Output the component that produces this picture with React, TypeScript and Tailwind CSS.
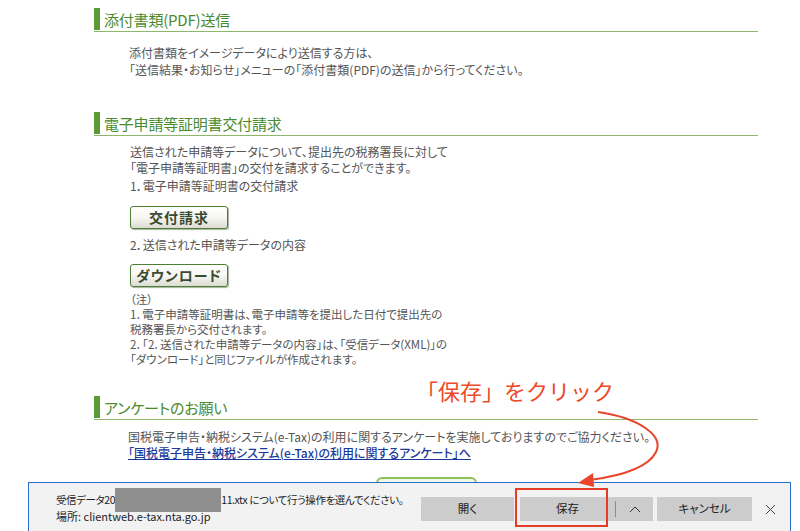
import React from 'react';

const jp = "font-['MS_PGothic','Noto_Sans_CJK_JP',sans-serif]";

const SectionHeader: React.FC<{ title: string }> = ({ title }) => (
  <div className="flex h-[24px] border-b border-[#8db86c]">
    <div className="w-[6px] h-[22px] bg-[#5b9a34]" />
    <div className="ml-[4px] text-[15px] leading-[23px] text-[#4a8a2c] tracking-[-0.2px]">{title}</div>
  </div>
);

const GreenButton: React.FC<{ label: string }> = ({ label }) => (
  <button className="w-[98px] h-[23px] rounded-[3px] border border-[#4d7f33] bg-gradient-to-b from-white via-[#f7f7f3] to-[#dcdcd4] shadow-[1px_1px_1px_rgba(60,80,40,0.45)] text-[14px] font-bold text-[#3a4a30] leading-[21px] tracking-[1px]">
    {label}
  </button>
);

export default function App() {
  return (
    <div className={`relative w-[800px] h-[531px] overflow-hidden bg-white ${jp} [font-feature-settings:'palt']`}>
      <div className="ml-[94px] w-[664px] pt-[8px]">
        <SectionHeader title="添付書類(PDF)送信" />
        <div className="mt-[12px] pl-[35px] text-[12px] leading-[17px] text-[#555]">
          <p>添付書類をイメージデータにより送信する方は、</p>
          <p>「送信結果・お知らせ」メニューの「添付書類(PDF)の送信」から行ってください。</p>
        </div>

        <div className="mt-[34px]">
          <SectionHeader title="電子申請等証明書交付請求" />
        </div>
        <div className="mt-[8px] pl-[36px] text-[12px] leading-[16px] text-[#555]">
          <p>送信された申請等データについて、提出先の税務署長に対して</p>
          <p>「電子申請等証明書」の交付を請求することができます。</p>
          <p className="mt-[2px]">1．電子申請等証明書の交付請求</p>
          <div className="mt-[12px]">
            <GreenButton label="交付請求" />
          </div>
          <p className="mt-[8px]">2．送信された申請等データの内容</p>
          <div className="mt-[11px]">
            <GreenButton label="ダウンロード" />
          </div>
          <div className="mt-[5px] text-[11.5px] leading-[15px]">
            <p>（注）</p>
            <p>1．電子申請等証明書は、電子申請等を提出した日付で提出先の</p>
            <p>税務署長から交付されます。</p>
            <p>2．「2．送信された申請等データの内容」は、「受信データ(XML)」の</p>
            <p>「ダウンロード」と同じファイルが作成されます。</p>
          </div>
        </div>

        <div className="mt-[29px]">
          <SectionHeader title="アンケートのお願い" />
        </div>
        <div className="mt-[9px] pl-[34px] text-[12px] leading-[16px] text-[#555]">
          <p>国税電子申告・納税システム(e-Tax)の利用に関するアンケートを実施しておりますのでご協力ください。</p>
          <a className="text-[#1a3a9a] underline font-medium">「国税電子申告・納税システム(e-Tax)の利用に関するアンケート」へ</a>
        </div>
        <div className="mt-[16px] flex justify-center">
          <div className="w-[101px] h-[26px] rounded-[6px] border-2 border-[#8cc35a] bg-gradient-to-b from-[#eef7e6] to-white" />
        </div>
      </div>

      {/* annotation */}
      <div className="absolute left-[416px] top-[375px] text-[22px] leading-[30px] text-[#ee4a2a] font-['Noto_Sans_CJK_JP',sans-serif] [font-feature-settings:normal]">
        「保存」をクリック
      </div>

      {/* download bar */}
      <div className="absolute left-[28px] top-[482px] w-[763px] h-[60px] border border-[#2b6fd0] bg-[#f2f2f2] font-['Noto_Sans_CJK_JP',sans-serif]">
        <div className="flex items-start">
          <div className="pl-[27px] pt-[9px] text-[11px] leading-[16px] text-[#222] w-[392px] shrink-0 whitespace-nowrap">
            <div className="flex items-center text-[10.5px] tracking-[-0.4px]">
              <span>受信データ20</span>
              <span className="inline-block w-[106px] h-[24px] bg-[#8f8f8f] -my-[4px]" />
              <span>11.xtx について行う操作を選んでください。</span>
            </div>
            <div>場所: clientweb.e-tax.nta.go.jp</div>
          </div>
          <div className="flex items-center pt-[14px] text-[11.5px] text-[#222] whitespace-nowrap">
            <button className="w-[93px] h-[24px] bg-[#cccccc]">開く</button>
            <button className="ml-[6px] w-[95px] h-[24px] bg-[#cccccc]">保存</button>
            <div className="w-px h-[24px] bg-[#cccccc] flex items-center">
              <div className="w-px h-[16px] bg-[#8a8a8a]" />
            </div>
            <button className="w-[37px] h-[24px] bg-[#cccccc] flex items-center justify-center">
              <svg width="12" height="8" viewBox="0 0 12 8" fill="none" stroke="#333" strokeWidth="1">
                <path d="M1 7 L6 2 L11 7" />
              </svg>
            </button>
            <button className="ml-[4px] w-[95px] h-[24px] bg-[#cccccc]">キャンセル</button>
            <button className="ml-[8px] w-[20px] h-[24px] flex items-center justify-center">
              <svg width="11" height="11" viewBox="0 0 11 11" stroke="#444" strokeWidth="1">
                <path d="M1 1 L10 10 M10 1 L1 10" />
              </svg>
            </button>
          </div>
        </div>
      </div>

      {/* red highlight around save */}
      <div className="absolute left-[515px] top-[488px] w-[93px] h-[39px] border-2 border-[#e53d25]" />

      {/* curved arrow */}
      <svg className="absolute left-0 top-0" width="800" height="531" viewBox="0 0 800 531" fill="none">
        <path d="M598 412 C 640 418, 664 436, 656 452 C 648 468, 620 476, 590 480" stroke="#e8452c" strokeWidth="2" />
        <path d="M578 483 L593 473 L594 487 Z" fill="#e8452c" />
      </svg>
    </div>
  );
}
